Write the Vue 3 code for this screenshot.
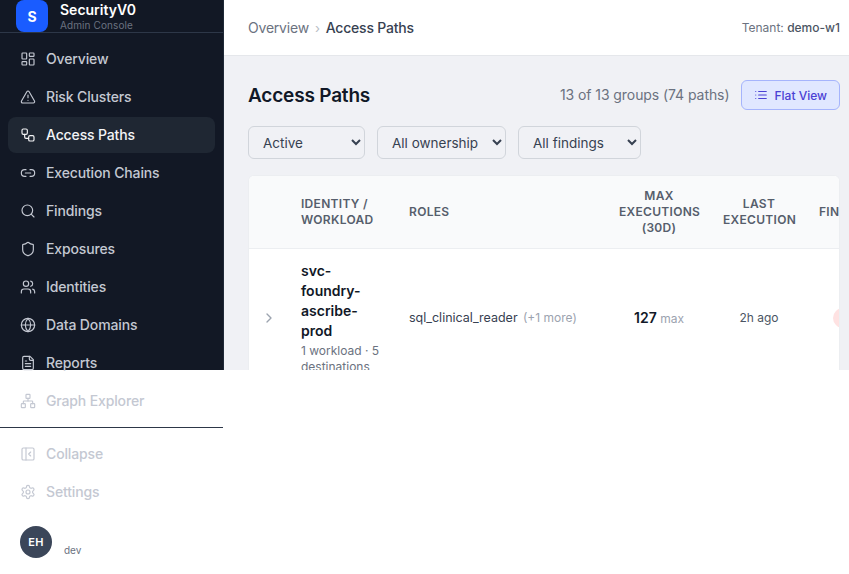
<script setup>
// icon helpers, everything on lucide's 24px grid
const rect = (x, y, w, h, r) =>
  `M${x + r} ${y}h${w - 2 * r}a${r} ${r} 0 0 1 ${r} ${r}v${h - 2 * r}a${r} ${r} 0 0 1-${r} ${r}h-${w - 2 * r}a${r} ${r} 0 0 1-${r}-${r}v-${h - 2 * r}a${r} ${r} 0 0 1 ${r}-${r}z`
const circle = (cx, cy, r) => `M${cx - r} ${cy}a${r} ${r} 0 1 0 ${2 * r} 0a${r} ${r} 0 1 0-${2 * r} 0z`

const icons = {
  overview: [rect(3, 3, 7, 9, 1), rect(14, 3, 7, 5, 1), rect(14, 12, 7, 9, 1), rect(3, 16, 7, 5, 1)],
  risk: ['m21.73 18-8-14a2 2 0 0 0-3.48 0l-8 14A2 2 0 0 0 4 21h16a2 2 0 0 0 1.73-3', 'M12 9v4', 'M12 17h.01'],
  paths: [rect(3, 3, 8, 8, 2), 'M7 11v4a2 2 0 0 0 2 2h4', rect(13, 13, 8, 8, 2)],
  chains: ['M9 17H7A5 5 0 0 1 7 7h2', 'M15 7h2a5 5 0 1 1 0 10h-2', 'M8 12h8'],
  findings: [circle(11, 11, 8), 'm21 21-4.3-4.3'],
  exposures: ['M20 13c0 5-3.5 7.5-7.66 8.95a1 1 0 0 1-.67-.01C7.5 20.5 4 18 4 13V6a1 1 0 0 1 1-1c2 0 4.5-1.2 6.24-2.72a1.17 1.17 0 0 1 1.52 0C14.51 3.81 17 5 19 5a1 1 0 0 1 1 1z'],
  identities: ['M16 21v-2a4 4 0 0 0-4-4H6a4 4 0 0 0-4 4v2', circle(9, 7, 4), 'M22 21v-2a4 4 0 0 0-3-3.87', 'M16 3.13a4 4 0 0 1 0 7.75'],
  domains: [circle(12, 12, 10), 'M12 2a14.5 14.5 0 0 0 0 20 14.5 14.5 0 0 0 0-20', 'M2 12h20'],
  reports: ['M15 2H6a2 2 0 0 0-2 2v16a2 2 0 0 0 2 2h12a2 2 0 0 0 2-2V7z', 'M14 2v4a2 2 0 0 0 2 2h4', 'M10 9H8', 'M16 13H8', 'M16 17H8'],
  graph: [rect(16, 16, 6, 6, 1), rect(2, 16, 6, 6, 1), rect(9, 2, 6, 6, 1), 'M5 16v-3a1 1 0 0 1 1-1h12a1 1 0 0 1 1 1v3', 'M12 12V8'],
  collapse: [rect(3, 3, 18, 18, 2), 'M9 3v18', 'm16 15-3-3 3-3'],
  settings: ['M12.22 2h-.44a2 2 0 0 0-2 2v.18a2 2 0 0 1-1 1.73l-.43.25a2 2 0 0 1-2 0l-.15-.08a2 2 0 0 0-2.73.73l-.22.38a2 2 0 0 0 .73 2.73l.15.1a2 2 0 0 1 1 1.72v.51a2 2 0 0 1-1 1.74l-.15.09a2 2 0 0 0-.73 2.73l.22.38a2 2 0 0 0 2.73.73l.15-.08a2 2 0 0 1 2 0l.43.25a2 2 0 0 1 1 1.73V20a2 2 0 0 0 2 2h.44a2 2 0 0 0 2-2v-.18a2 2 0 0 1 1-1.73l.43-.25a2 2 0 0 1 2 0l.15.08a2 2 0 0 0 2.73-.73l.22-.39a2 2 0 0 0-.73-2.73l-.15-.08a2 2 0 0 1-1-1.74v-.5a2 2 0 0 1 1-1.74l.15-.09a2 2 0 0 0 .73-2.73l-.22-.38a2 2 0 0 0-2.73-.73l-.15.08a2 2 0 0 1-2 0l-.43-.25a2 2 0 0 1-1-1.73V4a2 2 0 0 0-2-2z', circle(12, 12, 3)],
  list: ['M8 6h13', 'M8 12h13', 'M8 18h13', 'M3 6h.01', 'M3 12h.01', 'M3 18h.01'],
  chevron: ['m9 18 6-6-6-6']
}

const navItems = [
  { label: 'Overview', icon: 'overview' },
  { label: 'Risk Clusters', icon: 'risk' },
  { label: 'Access Paths', icon: 'paths', active: true },
  { label: 'Execution Chains', icon: 'chains' },
  { label: 'Findings', icon: 'findings' },
  { label: 'Exposures', icon: 'exposures' },
  { label: 'Identities', icon: 'identities' },
  { label: 'Data Domains', icon: 'domains' },
  { label: 'Reports', icon: 'reports' },
  { label: 'Graph Explorer', icon: 'graph' }
]

const footerItems = [
  { label: 'Collapse', icon: 'collapse' },
  { label: 'Settings', icon: 'settings' }
]

const filters = [
  { name: 'status', options: ['Active', 'All', 'Inactive'] },
  { name: 'ownership', options: ['All ownership', 'Owned', 'Unowned'] },
  { name: 'findings', options: ['All findings', 'With findings', 'No findings'] }
]
</script>

<template>
  <div class="layout">
    <aside class="sidebar">
      <div class="brand">
        <div class="logo">S</div>
        <div class="brand-text">
          <div class="brand-name">SecurityV0</div>
          <div class="brand-sub">Admin Console</div>
        </div>
      </div>

      <nav class="nav">
        <a v-for="item in navItems" :key="item.label" class="nav-item" :class="{ active: item.active }">
          <svg class="icon" viewBox="0 0 24 24"><path v-for="d in icons[item.icon]" :key="d" :d="d" /></svg>
          <span>{{ item.label }}</span>
        </a>
      </nav>

      <div class="side-footer">
        <a v-for="item in footerItems" :key="item.label" class="nav-item">
          <svg class="icon" viewBox="0 0 24 24"><path v-for="d in icons[item.icon]" :key="d" :d="d" /></svg>
          <span>{{ item.label }}</span>
        </a>
      </div>

      <div class="user">
        <div class="avatar">EH</div>
        <div class="user-role">dev</div>
      </div>
    </aside>

    <main class="main">
      <header class="topbar">
        <div class="crumbs">
          <span class="crumb">Overview</span>
          <span class="crumb-sep">›</span>
          <span class="crumb-current">Access Paths</span>
        </div>
        <div class="tenant">Tenant: <span class="tenant-name">demo-w1</span></div>
      </header>

      <section class="content">
        <div class="title-row">
          <h1>Access Paths</h1>
          <div class="title-right">
            <span class="count">13 of 13 groups (74 paths)</span>
            <button class="view-btn">
              <svg class="btn-icon" viewBox="0 0 24 24"><path v-for="d in icons.list" :key="d" :d="d" /></svg>
              Flat View
            </button>
          </div>
        </div>

        <div class="filters">
          <select v-for="f in filters" :key="f.name" class="filter" :class="'filter-' + f.name">
            <option v-for="o in f.options" :key="o">{{ o }}</option>
          </select>
        </div>

        <div class="card">
          <table>
            <colgroup>
              <col class="col-chev" />
              <col class="col-identity" />
              <col class="col-roles" />
              <col class="col-max" />
              <col class="col-last" />
              <col class="col-findings" />
            </colgroup>
            <thead>
              <tr>
                <th></th>
                <th>Identity / Workload</th>
                <th>Roles</th>
                <th class="center">Max Executions (30d)</th>
                <th class="center">Last Execution</th>
                <th>Findings</th>
              </tr>
            </thead>
            <tbody>
              <tr>
                <td class="chev-cell">
                  <svg class="chev" viewBox="0 0 24 24"><path v-for="d in icons.chevron" :key="d" :d="d" /></svg>
                </td>
                <td>
                  <div class="identity">svc-foundry-ascribe-prod</div>
                  <div class="identity-sub">1 workload · 5 destinations</div>
                </td>
                <td class="roles"><span class="role-name">sql_clinical_reader</span> <span class="muted more">(+1 more)</span></td>
                <td class="center"><span class="max-num">127</span> <span class="muted">max</span></td>
                <td class="center last">2h ago</td>
                <td class="finding-cell"><span class="finding-dot"></span></td>
              </tr>
            </tbody>
          </table>
        </div>
      </section>
    </main>
  </div>
</template>

<style>
html, body {
  min-height: 574px;
  background: #fff;
}
</style>

<style scoped>
.layout {
  display: flex;
  height: 370px;
  font-family: Inter, "Liberation Sans", sans-serif;
}

.sidebar {
  width: 224px;
  box-sizing: border-box;
  flex-shrink: 0;
  background: #121825;
  border-right: 1px solid #1f2937;
  color: #c4c8d2;
}

.brand {
  display: flex;
  gap: 12px;
  height: 33px;
  padding-left: 16px;
  border-bottom: 1px solid #2d3748;
  box-sizing: border-box;
}

.logo {
  width: 32px;
  height: 32px;
  flex-shrink: 0;
  border-radius: 8px;
  background: #1a5cff;
  color: #fff;
  font-size: 14px;
  font-weight: 700;
  display: flex;
  align-items: center;
  justify-content: center;
}

.brand-name {
  margin-top: 1px;
  font-size: 14px;
  font-weight: 600;
  line-height: 18px;
  color: #fff;
}

.brand-sub {
  font-size: 10px;
  line-height: 12px;
  letter-spacing: 0.01em;
  color: #6b7280;
}

.nav {
  display: flex;
  flex-direction: column;
  gap: 2px;
  padding: 8px;
}

.side-footer {
  display: flex;
  flex-direction: column;
  gap: 2px;
  padding: 8px;
  border-top: 1px solid #2d3748;
}

.nav-item {
  display: flex;
  align-items: center;
  gap: 10px;
  height: 36px;
  padding: 0 12px;
  border-radius: 8px;
  font-size: 14px;
  font-weight: 500;
  letter-spacing: -0.01em;
}

.nav-item span {
  padding-bottom: 2px;
}

.nav-item.active {
  background: #1f2733;
  color: #f3f4f6;
}

.icon {
  width: 16px;
  height: 16px;
  flex-shrink: 0;
  fill: none;
  stroke: currentColor;
  stroke-width: 1.75;
  stroke-linecap: round;
  stroke-linejoin: round;
}

.user {
  display: flex;
  gap: 12px;
  padding: 8px 20px 16px;
}

.avatar {
  width: 32px;
  height: 32px;
  border-radius: 50%;
  background: #3b4659;
  color: #fff;
  font-size: 11px;
  font-weight: 600;
  letter-spacing: 0.03em;
  display: flex;
  align-items: center;
  justify-content: center;
}

.user-role {
  align-self: flex-end;
  font-size: 10px;
  line-height: 16px;
  color: #6b7280;
}

.main {
  flex: 1;
  min-width: 0;
  display: flex;
  flex-direction: column;
  overflow: hidden;
}

.topbar {
  flex-shrink: 0;
  height: 56px;
  box-sizing: border-box;
  display: flex;
  align-items: center;
  justify-content: space-between;
  padding: 0 9px 0 24px;
  border-bottom: 1px solid #e5e7eb;
  background: #fff;
}

.crumbs {
  display: flex;
  align-items: center;
  gap: 6px;
  font-size: 14px;
  letter-spacing: -0.015em;
}

.crumb {
  color: #6b7280;
}

.crumb-sep {
  font-size: 13px;
  color: #b8bcc5;
}

.crumb-current {
  color: #374151;
  font-weight: 500;
}

.tenant {
  font-size: 12px;
  color: #6b7280;
}

.tenant-name {
  color: #4b5563;
  font-weight: 500;
}

.content {
  flex: 1;
  padding: 24px 9px 0 24px;
  background: #f0f1f5;
}

.title-row {
  display: flex;
  align-items: center;
  justify-content: space-between;
  margin-bottom: 16px;
}

h1 {
  margin: 0;
  font-size: 19px;
  font-weight: 600;
  letter-spacing: -0.01em;
  color: #111827;
}

.title-right {
  display: flex;
  align-items: center;
  gap: 12px;
}

.count {
  padding-bottom: 1px;
  font-size: 14px;
  letter-spacing: -0.005em;
  color: #6b7280;
}

.view-btn {
  display: flex;
  align-items: center;
  gap: 6px;
  height: 30px;
  padding: 0 12px;
  border: 1px solid #a5b4fc;
  border-radius: 6px;
  background: #e0e7ff;
  color: #4a40d4;
  font-family: inherit;
  font-size: 12px;
  font-weight: 500;
}

.btn-icon {
  width: 14px;
  height: 14px;
  fill: none;
  stroke: currentColor;
  stroke-width: 2;
  stroke-linecap: round;
  stroke-linejoin: round;
}

.filters {
  display: flex;
  gap: 12px;
  margin-bottom: 16px;
}

.filter {
  height: 33px;
  padding: 0 8px 0 10px;
  border: 1px solid #d1d5db;
  border-radius: 6px;
  background: transparent;
  color: #374151;
  font-family: inherit;
  font-size: 13.5px;
}

.filter-status {
  width: 117px;
}

.filter-ownership {
  width: 129px;
}

.filter-findings {
  width: 123px;
}

.card {
  border: 1px solid #eceef1;
  border-bottom: 0;
  border-radius: 6px 6px 0 0;
  background: #fff;
  overflow: hidden;
}

table {
  width: 648px;
  table-layout: fixed;
  border-collapse: collapse;
}

.col-chev {
  width: 40px;
}

.col-identity {
  width: 108px;
}

.col-roles {
  width: 210px;
}

.col-max {
  width: 104px;
}

.col-last {
  width: 96px;
}

.col-findings {
  width: 90px;
}

th {
  padding: 12px;
  background: #f9fafb;
  border-bottom: 1px solid #eceef1;
  color: #565e6c;
  font-size: 12px;
  font-weight: 600;
  line-height: 16px;
  letter-spacing: 0.025em;
  text-transform: uppercase;
  text-align: left;
}

td {
  padding: 12px;
  font-size: 12px;
  line-height: 16px;
  color: #374151;
}

.center {
  text-align: center;
}

.chev-cell {
  text-align: center;
  padding: 0;
}

.chev {
  display: inline-block;
  vertical-align: middle;
  width: 16px;
  height: 16px;
  fill: none;
  stroke: #9ca3af;
  stroke-width: 2;
  stroke-linecap: round;
  stroke-linejoin: round;
}

.identity {
  font-size: 14px;
  font-weight: 600;
  line-height: 20px;
  color: #111827;
}

.identity-sub {
  margin-top: 2px;
  font-size: 12px;
  line-height: 16px;
  color: #6b7280;
}

.role-name {
  font-size: 12.5px;
}

.muted {
  color: #9ca3af;
}

.more {
  margin-left: 2px;
}

.max-num {
  font-size: 14px;
  font-weight: 600;
  color: #111827;
}

.last {
  color: #4b5563;
}

.finding-cell {
  padding-left: 26px;
}

.finding-dot {
  display: block;
  width: 20px;
  height: 20px;
  border-radius: 50%;
  background: #fee2e2;
}
</style>
